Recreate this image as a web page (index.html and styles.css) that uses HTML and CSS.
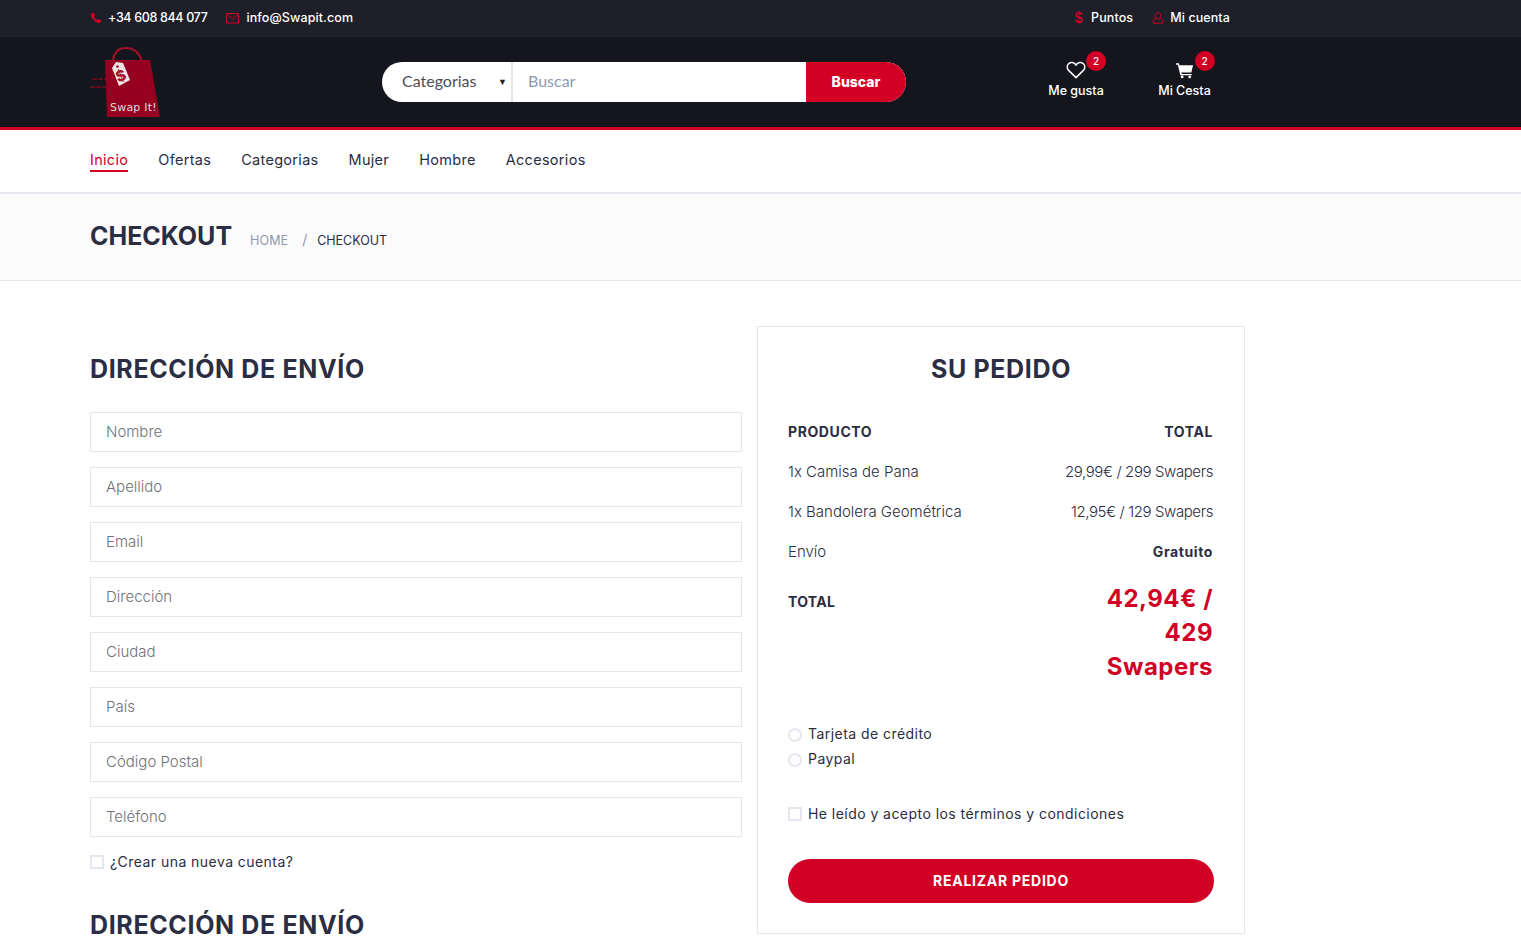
FILE: index.html
```html
<!DOCTYPE html>
<html lang="es">
<head>
<meta charset="utf-8">
<title>Checkout</title>
<link rel="stylesheet" href="styles.css">
</head>
<body>
<header class="topbar">
  <div class="wrap topbar-in">
    <div class="top-group">
      <span class="top-item"><svg class="ti" viewBox="0 0 12 12"><path d="M2.2 1 L4 .8 L5 3.4 L3.900 4.500 C4.500 6 5.800 7.400 7.400 8.100 L8.600 7 L11 8.200 L10.800 10 C10.500 11 9.600 11.200 8.800 11 C5 10.200 1.900 7 1 3.200 C.8 2.200 1.300 1.300 2.200 1 Z" fill="#d10024"/></svg><span class="phone">+34 608 844 077</span></span>
      <span class="top-item"><svg class="ti ti-mail" viewBox="0 0 13 12"><path d="M.5 1.500h12v9.500H.5zM.7 2 6.500 7l5.800-5" fill="none" stroke="#d10024"/></svg>info@Swapit.com</span>
    </div>
    <div class="top-group">
      <span class="top-item"><span class="dollar">$</span>Puntos</span>
      <span class="top-item"><svg class="ti" viewBox="0 0 12 12"><path d="M6 .7a2.800 2.800 0 0 1 2.800 2.800v.9A2.800 2.800 0 0 1 6 7.200a2.800 2.800 0 0 1-2.800-2.800v-.9A2.800 2.800 0 0 1 6 .7ZM3.400 6.600 1.200 8.200v3h9.600v-3L8.600 6.600" fill="none" stroke="#d10024"/></svg>Mi cuenta</span>
    </div>
  </div>
</header>
<div class="mainbar">
  <div class="wrap mainbar-in">
    <svg class="logo" viewBox="0 0 72 72">
      <defs>
        <filter id="grain" x="0" y="0" width="100%" height="100%">
          <feTurbulence type="fractalNoise" baseFrequency="0.9" numOctaves="2" seed="4"/>
          <feColorMatrix values="0 0 0 0 0  0 0 0 0 0  0 0 0 0 0  0 0 0 .55 -.12"/>
          <feComposite in2="SourceGraphic" operator="in"/>
          <feMerge><feMergeNode in="SourceGraphic"/><feMergeNode/></feMerge>
        </filter>
      </defs>
      <path d="M23 14C24 4 29 1 36 1s13 4 16 13" fill="none" stroke="#a30f28" stroke-width="2"/>
      <path d="M15 13H60L70 70H17Z" fill="#a30e26" filter="url(#grain)"/>
      <path d="M2 32h14M0 40h17" stroke="#7c0b1e" stroke-width="1.500" stroke-dasharray="5 1"/>
      <path d="M26 15 33 16 40 33 29 39 22 21Z" fill="#eee6e6"/>
      <circle cx="27.500" cy="19.500" r="1.300" fill="#8a0d22"/>
      <text class="logo-s" x="31" y="34" transform="rotate(-22 31 29)">$</text>
      <text class="logo-t" x="20" y="64">Swap It!</text>
    </svg>
    <form class="search">
      <span class="search-cat">Categorias<span class="caret">▼</span></span>
      <span class="search-input">Buscar</span>
      <span class="search-btn">Buscar</span>
    </form>
    <div class="actions">
      <div class="action action-like">
        <svg class="action-icon" viewBox="0 0 20 18"><path d="M10 16.600 2.600 9.400C.6 7.300.8 4.100 2.800 2.500 5 .8 8.200 1.300 10 4c1.800-2.700 5-3.200 7.200-1.500 2 1.600 2.200 4.800.2 6.900Z" fill="none" stroke="#fff" stroke-width="1.500"/></svg>
        <span class="badge">2</span>
        <span>Me gusta</span>
      </div>
      <div class="action action-cart">
        <svg class="action-icon" viewBox="0 0 20 18"><path d="M1 2h3l.6 2H19l-1.800 7.500H6.700l.4 1.600h10.400v1.500H5.600L3 3.500H1Z" fill="#fff"/><circle cx="7.500" cy="16.300" r="1.500" fill="#fff"/><circle cx="15.500" cy="16.300" r="1.500" fill="#fff"/></svg>
        <span class="badge">2</span>
        <span>Mi Cesta</span>
      </div>
    </div>
  </div>
</div>
<nav class="nav">
  <div class="wrap nav-in">
    <a class="nav-link active">Inicio</a>
    <a class="nav-link">Ofertas</a>
    <a class="nav-link">Categorias</a>
    <a class="nav-link">Mujer</a>
    <a class="nav-link">Hombre</a>
    <a class="nav-link">Accesorios</a>
  </div>
</nav>
<section class="crumbs">
  <div class="wrap crumbs-in">
    <h1 class="crumb-title">CHECKOUT</h1>
    <span class="crumb-home">HOME</span>
    <span class="crumb-sep">/</span>
    <span class="crumb-cur">CHECKOUT</span>
  </div>
</section>
<main class="wrap checkout">
  <section class="billing">
    <h2 class="section-title">DIRECCIÓN DE ENVÍO</h2>
    <div class="fields">
      <div class="field">Nombre</div>
      <div class="field">Apellido</div>
      <div class="field">Email</div>
      <div class="field">Dirección</div>
      <div class="field">Ciudad</div>
      <div class="field">País</div>
      <div class="field">Código Postal</div>
      <div class="field">Teléfono</div>
    </div>
    <label class="check check-create"><span class="box"></span>¿Crear una nueva cuenta?</label>
    <h2 class="section-title second">DIRECCIÓN DE ENVÍO</h2>
  </section>
  <aside class="order">
    <h2 class="section-title center">SU PEDIDO</h2>
    <div class="row head"><span>PRODUCTO</span><span>TOTAL</span></div>
    <div class="row"><span>1x Camisa de Pana</span><span class="price">29,99€ / 299 Swapers</span></div>
    <div class="row"><span>1x Bandolera Geométrica</span><span class="price">12,95€ / 129 Swapers</span></div>
    <div class="row"><span>Envío</span><strong>Gratuito</strong></div>
    <div class="row-total"><strong class="total-label">TOTAL</strong><strong class="total-val">42,94€ /<br>429<br>Swapers</strong></div>
    <div class="pay">
      <label class="check"><span class="radio"></span>Tarjeta de crédito</label>
      <label class="check"><span class="radio"></span>Paypal</label>
    </div>
    <label class="check terms"><span class="box"></span>He leído y acepto los términos y condiciones</label>
    <a class="order-btn">REALIZAR PEDIDO</a>
  </aside>
</main>
</body>
</html>
```
FILE: styles.css
```css
* { box-sizing: border-box; }
html, body { margin: 0; height: 952px; overflow: hidden; }
body { font-family: Inter, "Noto Sans", sans-serif; color: #2b2d42; background: #fff; font-size: 14px; }
.wrap { width: 1170px; margin-left: 75px; padding: 0 15px; }
.topbar { height: 37px; background: #1e1f29; color: #fff; font-size: 12.500px; font-weight: 500; letter-spacing: .1px; }
.topbar-in { height: 35px; display: flex; justify-content: space-between; align-items: center; }
.top-group { display: flex; gap: 19px; }
.top-item { display: flex; align-items: center; gap: 6px; }
.phone { letter-spacing: -.35px; }
.ti { width: 12px; height: 12px; }
.ti-mail { width: 13px; margin-right: 1px; }
.dollar { color: #d10024; width: 9px; font-size: 14px; margin-right: 2px; }
.mainbar { height: 93px; background: #15161d; border-bottom: 3px solid #d10024; }
.mainbar-in { display: flex; height: 90px; align-items: flex-start; position: relative; }
.logo { width: 72px; height: 72px; margin-top: 10px; flex: none; }
.logo-t { font-size: 11px; fill: #ddd; font-family: "DejaVu Sans", sans-serif; letter-spacing: .2px; }
.logo-s { font-size: 15px; font-weight: 800; fill: #a8102a; text-anchor: middle; }
.search { display: flex; width: 524px; height: 40px; margin: 25px 0 0 220px; border-radius: 20px; overflow: hidden; background: #fff; flex: none; }
.search-cat { width: 131px; padding: 0 0 3px 20px; border-right: 2px solid #e4e7ed; display: flex; align-items: center; font-family: Lato, sans-serif; font-size: 16px; color: #4a4c5e; position: relative; }
.caret { position: absolute; right: 4px; top: 14px; font-size: 9px; color: #222; }
.search-input { flex: 1; padding: 0 0 3px 15px; display: flex; align-items: center; font-family: Lato, sans-serif; font-size: 16px; color: #8d99ae; }
.search-btn { width: 100px; padding-bottom: 2px; background: #d10024; color: #fff; font-weight: 800; font-size: 14px; display: flex; align-items: center; justify-content: center; }
.actions { display: flex; margin-left: 142px; margin-top: 24px; gap: 52.500px; }
.action { position: relative; display: flex; flex-direction: column; align-items: center; color: #fff; font-size: 12.500px; font-weight: 500; width: 56px; gap: 4px; }
.action-icon { width: 20px; height: 18px; }
.action-cart .action-icon { width: 19px; }
.badge { position: absolute; width: 20px; height: 20px; border-radius: 50%; background: #d10024; font-size: 10px; display: flex; align-items: center; justify-content: center; left: 38px; top: -10px; }
.nav { height: 64px; border-bottom: 2px solid #e4e7ed; }
.nav-in { display: flex; gap: 30px; padding-top: 20px; }
.nav-link { font-size: 14.500px; letter-spacing: .3px; height: 22px; color: #2b2d42; line-height: 20px; }
.nav-link.active { color: #d10024; border-bottom: 2px solid #d10024; }
.crumbs { height: 87px; background: #fbfbfc; border-bottom: 1px solid #e4e7ed; }
.crumbs-in { display: flex; align-items: baseline; padding-top: 27px; }
.crumb-title { margin: 0 18px 0 0; font-size: 25px; font-weight: 700; line-height: 30px; }
.crumb-home { font-size: 12.500px; color: #8d99ae; letter-spacing: .1px; }
.crumb-sep { font-size: 14px; color: #8d99ae; margin: 0 10px 0 14px; }
.crumb-cur { font-size: 12.500px; }
.checkout { display: flex; align-items: flex-start; gap: 15px; padding-top: 45px; }
.billing { width: 652px; flex: none; padding-top: 29px; }
.section-title { margin: 0; font-size: 25px; font-weight: 700; line-height: 29px; letter-spacing: .64px; }
.section-title.center { text-align: center; margin-bottom: 27px; }
.section-title.second { margin-top: 39px; }
.fields { display: flex; flex-direction: column; gap: 15px; margin-top: 28px; }
.field { height: 40px; border: 1px solid #e4e7ed; padding: 0 0 2px 15px; display: flex; align-items: center; font-weight: 300; font-size: 15px; color: #6f7278; }
.check { display: flex; align-items: center; font-size: 14px; letter-spacing: .45px; color: #2b2d42; line-height: 20px; }
.check-create { margin-top: 15px; gap: 6px; }
.box { width: 14px; height: 14px; border: 2px solid #e4e7ed; flex: none; }
.radio { width: 14px; height: 14px; border: 2px solid #e4e7ed; border-radius: 50%; flex: none; margin-top: 2px; }
.order { width: 488px; height: 608px; border: 1px solid #e4e7ed; padding: 28px 30px 0; flex: none; }
.row { display: flex; justify-content: space-between; height: 40px; align-items: center; font-weight: 300; font-size: 15px; color: #2b2d42; padding-right: 1px; }
.price { letter-spacing: -.4px; }
.row strong { font-size: 14px; font-weight: 700; letter-spacing: .6px; color: #2b2d42; }
.row.head { font-size: 14px; font-weight: 700; letter-spacing: .6px; color: #2b2d42; }
.row-total { display: flex; justify-content: space-between; align-items: flex-start; padding-right: 1px; margin-top: 11px; }
.total-label { margin-top: 10px; line-height: 20px; letter-spacing: .3px; }
.total-val { color: #d10024; font-size: 24px; line-height: 34px; text-align: right; letter-spacing: .5px; }
.pay { margin-top: 40px; display: flex; flex-direction: column; gap: 5px; }
.pay .check { gap: 6px; }
.terms { margin-top: 35px; gap: 6px; }
.order-btn { display: flex; align-items: center; justify-content: center; height: 44px; padding-bottom: 1px; margin-top: 35px; border-radius: 22px; background: #d10024; color: #fff; font-weight: 700; font-size: 14px; letter-spacing: .75px; }
```
